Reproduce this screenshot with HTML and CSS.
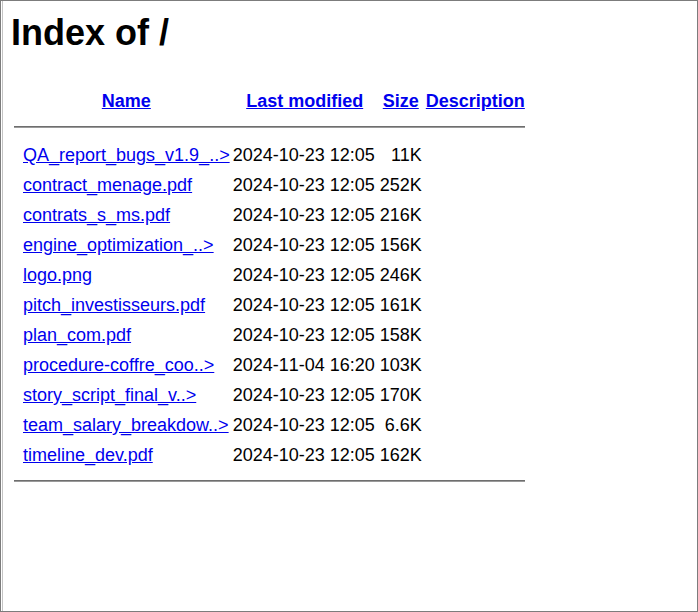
FILE: index.html
```html
<!DOCTYPE html>
<html>
<head>
<meta charset="utf-8">
<title>Index of /</title>
<link rel="stylesheet" href="styles.css">
</head>
<body>
<div class="frame">
<h1>Index of /</h1>
<table class="listing">
<tr><th class="ico"><span class="icon"></span></th><th><a href="#">Name</a></th><th><a href="#">Last modified</a></th><th><a href="#">Size</a></th><th><a href="#">Description</a></th></tr>
<tr><th colspan="5" class="rule"><hr></th></tr>
<tr><td class="ico"><span class="icon"></span></td><td><a href="#">QA_report_bugs_v1.9_..&gt;</a></td><td class="d">2024-10-23 12:05</td><td class="r">11K</td><td>&nbsp;</td></tr>
<tr><td class="ico"><span class="icon"></span></td><td><a href="#">contract_menage.pdf</a></td><td class="d">2024-10-23 12:05</td><td class="r">252K</td><td>&nbsp;</td></tr>
<tr><td class="ico"><span class="icon"></span></td><td><a href="#">contrats_s_ms.pdf</a></td><td class="d">2024-10-23 12:05</td><td class="r">216K</td><td>&nbsp;</td></tr>
<tr><td class="ico"><span class="icon"></span></td><td><a href="#">engine_optimization_..&gt;</a></td><td class="d">2024-10-23 12:05</td><td class="r">156K</td><td>&nbsp;</td></tr>
<tr><td class="ico"><span class="icon"></span></td><td><a href="#">logo.png</a></td><td class="d">2024-10-23 12:05</td><td class="r">246K</td><td>&nbsp;</td></tr>
<tr><td class="ico"><span class="icon"></span></td><td><a href="#">pitch_investisseurs.pdf</a></td><td class="d">2024-10-23 12:05</td><td class="r">161K</td><td>&nbsp;</td></tr>
<tr><td class="ico"><span class="icon"></span></td><td><a href="#">plan_com.pdf</a></td><td class="d">2024-10-23 12:05</td><td class="r">158K</td><td>&nbsp;</td></tr>
<tr><td class="ico"><span class="icon"></span></td><td><a href="#">procedure-coffre_coo..&gt;</a></td><td class="d">2024-11-04 16:20</td><td class="r">103K</td><td>&nbsp;</td></tr>
<tr><td class="ico"><span class="icon"></span></td><td><a href="#">story_script_final_v..&gt;</a></td><td class="d">2024-10-23 12:05</td><td class="r">170K</td><td>&nbsp;</td></tr>
<tr><td class="ico"><span class="icon"></span></td><td><a href="#">team_salary_breakdow..&gt;</a></td><td class="d">2024-10-23 12:05</td><td class="r">6.6K</td><td>&nbsp;</td></tr>
<tr><td class="ico"><span class="icon"></span></td><td><a href="#">timeline_dev.pdf</a></td><td class="d">2024-10-23 12:05</td><td class="r">162K</td><td>&nbsp;</td></tr>
<tr><th colspan="5" class="rule"><hr></th></tr>
</table>
</div>
</body>
</html>
```

FILE: styles.css
```css
html, body {
  margin: 0;
  padding: 0;
  background: #ffffff;
}
.frame {
  box-sizing: border-box;
  height: 612px;
  border: 1px solid #7c7c7c;
  box-shadow: inset 1px 0 0 #ffffff, inset 2px 0 0 #c4c4c4;
  padding: 1px 8px 8px 10px;
  font-family: "Liberation Sans", Arial, sans-serif;
  font-size: 18px;
  color: #000;
}
h1 {
  font-size: 36px;
  line-height: 41px;
  font-weight: bold;
  margin: 10px 0 32px 0;
}
.listing {
  border-spacing: 2px;
}
.listing th, .listing td {
  padding: 1px;
  line-height: 26px;
  vertical-align: middle;
}
.listing th {
  font-weight: bold;
  text-align: center;
}
.listing td.d {
  text-align: left;
  font-kerning: none;
  padding-left: 0;
  padding-right: 2px;
}
.listing td.r {
  text-align: right;
}
.icon {
  display: inline-block;
  width: 5px;
  height: 1px;
  vertical-align: middle;
}
.listing a {
  color: #0000ee;
  text-decoration: underline;
}
.rule hr {
  margin: 8px 0 10px 0;
  border: 0;
  border-top: 1px solid #6e6e6e;
  border-bottom: 1px solid #9a9a9a;
  height: 0;
}
```
